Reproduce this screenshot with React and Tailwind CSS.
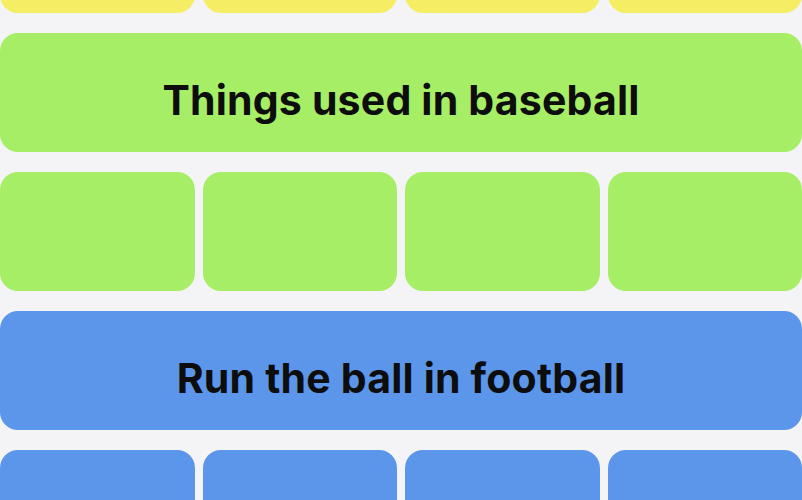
import React from "react";

const groups = [
  { title: "Sports equipment", color: "bg-[#f5ee64]" },
  { title: "Things used in baseball", color: "bg-[#a6ee65]" },
  { title: "Run the ball in football", color: "bg-[#5b96ea]" },
];

const Banner = ({ title, color }) => (
  <div
    className={`${color} h-[119px] rounded-[18px] flex items-center justify-center`}
  >
    <span
      className="text-[#0d0d0d] font-bold text-[41px] leading-none tracking-[0.2px] pt-[16px]"
      style={{ fontFamily: "Inter, Lato, sans-serif" }}
    >
      {title}
    </span>
  </div>
);

const TileRow = ({ color }) => (
  <div className="grid grid-cols-4 gap-[8px]">
    {[0, 1, 2, 3].map((i) => (
      <div key={i} className={`${color} h-[119px] rounded-[18px]`} />
    ))}
  </div>
);

export default function App() {
  return (
    <div className="w-[802px] h-[500px] overflow-hidden bg-[#f4f4f6]">
      <div className="flex flex-col gap-[20px] -mt-[106px]">
        <TileRow color={groups[0].color} />
        <Banner {...groups[1]} />
        <TileRow color={groups[1].color} />
        <Banner {...groups[2]} />
        <TileRow color={groups[2].color} />
      </div>
    </div>
  );
}
